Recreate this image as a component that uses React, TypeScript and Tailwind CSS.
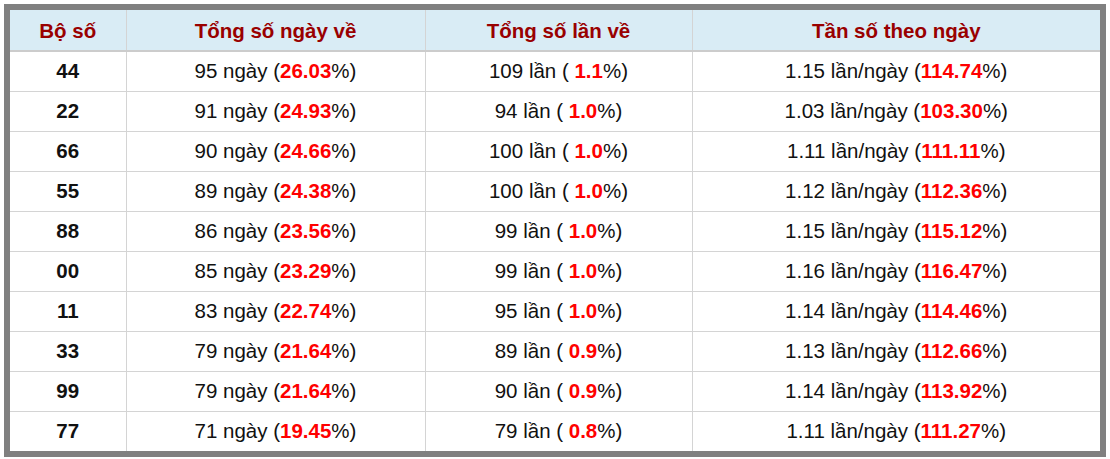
type Row = {
  bo: string;
  ngay: number;
  ngayPct: string;
  lan: number;
  lanPct: string;
  tanSo: string;
  tanSoPct: string;
};

const rows: Row[] = [
  { bo: "44", ngay: 95, ngayPct: "26.03", lan: 109, lanPct: "1.1", tanSo: "1.15", tanSoPct: "114.74" },
  { bo: "22", ngay: 91, ngayPct: "24.93", lan: 94, lanPct: "1.0", tanSo: "1.03", tanSoPct: "103.30" },
  { bo: "66", ngay: 90, ngayPct: "24.66", lan: 100, lanPct: "1.0", tanSo: "1.11", tanSoPct: "111.11" },
  { bo: "55", ngay: 89, ngayPct: "24.38", lan: 100, lanPct: "1.0", tanSo: "1.12", tanSoPct: "112.36" },
  { bo: "88", ngay: 86, ngayPct: "23.56", lan: 99, lanPct: "1.0", tanSo: "1.15", tanSoPct: "115.12" },
  { bo: "00", ngay: 85, ngayPct: "23.29", lan: 99, lanPct: "1.0", tanSo: "1.16", tanSoPct: "116.47" },
  { bo: "11", ngay: 83, ngayPct: "22.74", lan: 95, lanPct: "1.0", tanSo: "1.14", tanSoPct: "114.46" },
  { bo: "33", ngay: 79, ngayPct: "21.64", lan: 89, lanPct: "0.9", tanSo: "1.13", tanSoPct: "112.66" },
  { bo: "99", ngay: 79, ngayPct: "21.64", lan: 90, lanPct: "0.9", tanSo: "1.14", tanSoPct: "113.92" },
  { bo: "77", ngay: 71, ngayPct: "19.45", lan: 79, lanPct: "0.8", tanSo: "1.11", tanSoPct: "111.27" },
];

const headers = ["Bộ số", "Tổng số ngày về", "Tổng số lần về", "Tần số theo ngày"];

function Red({ children }: { children: React.ReactNode }) {
  return <b className="font-bold text-[#ff0000]">{children}</b>;
}

export default function App() {
  return (
    <div className="bg-white p-[4px]" style={{ fontFamily: '"Liberation Sans", Arial, sans-serif' }}>
      <div className="border-[6px] border-[#808080]">
        <table className="w-full table-fixed border-collapse text-[20.5px] text-[#111]">
          <colgroup>
            <col className="w-[116px]" />
            <col className="w-[299px]" />
            <col className="w-[267px]" />
            <col />
          </colgroup>
          <thead>
            <tr className="h-[41px] bg-[#d9ecf5]">
              {headers.map((h, i) => (
                <th
                  key={h}
                  className={
                    "border-b-2 border-b-[#cccccc] pt-[2px] text-center font-bold leading-none text-[#990000] " +
                    (i > 0 ? "border-l border-l-[#d4d4d4]" : "")
                  }
                >
                  {h}
                </th>
              ))}
            </tr>
          </thead>
          <tbody>
            {rows.map((r, idx) => (
              <tr key={r.bo} className={"h-[40px] " + (idx < rows.length - 1 ? "border-b border-b-[#d4d4d4]" : "")}>
                <td className="text-center font-bold">{r.bo}</td>
                <td className="border-l border-l-[#d4d4d4] text-center">
                  {r.ngay} ngày (<Red>{r.ngayPct}</Red>%)
                </td>
                <td className="border-l border-l-[#d4d4d4] text-center">
                  {r.lan} lần ( <Red>{r.lanPct}</Red>%)
                </td>
                <td className="border-l border-l-[#d4d4d4] text-center">
                  {r.tanSo} lần/ngày (<Red>{r.tanSoPct}</Red>%)
                </td>
              </tr>
            ))}
          </tbody>
        </table>
      </div>
    </div>
  );
}
